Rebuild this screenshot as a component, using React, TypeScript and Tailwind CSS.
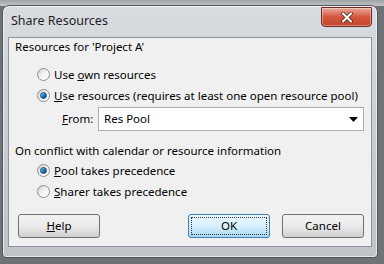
import React from 'react';

const font = { fontFamily: '"Noto Sans", "Open Sans", sans-serif' };

function Radio({ checked }: { checked?: boolean }) {
  return (
    <span className="relative flex h-[13px] w-[13px] shrink-0 items-center justify-center rounded-full border border-[#8e8f8f] bg-gradient-to-br from-[#cfcfcf] via-[#f4f4f4] to-[#ffffff]">
      {checked && (
        <span className="h-[7px] w-[7px] rounded-full border border-[#1a4b75] bg-gradient-to-br from-[#8fd3f6] via-[#1f7ec0] to-[#0d3d6e]" />
      )}
    </span>
  );
}

function RadioRow({ checked, children }: { checked?: boolean; children: React.ReactNode }) {
  return (
    <div className="ml-[28px] flex h-[21px] items-center gap-[4px] whitespace-nowrap">
      <Radio checked={checked} />
      <span>{children}</span>
    </div>
  );
}

function Button({ children, primary, className = '' }: { children: React.ReactNode; primary?: boolean; className?: string }) {
  if (primary) {
    return (
      <div className={`flex h-[24px] w-[82px] items-center justify-center rounded-[3px] border border-[#3c7fb1] bg-gradient-to-b from-[#eaf6fd] via-[#d9f0fc] to-[#a7d9f5] p-[2px] ${className}`}>
        <div className="flex h-full w-full items-center justify-center border border-dotted border-[#333]">{children}</div>
      </div>
    );
  }
  return (
    <div className={`flex h-[24px] w-[82px] items-center justify-center rounded-[3px] border border-[#707070] bg-gradient-to-b from-[#f2f2f2] via-[#ebebeb] to-[#cfcfcf] ${className}`}>
      {children}
    </div>
  );
}

export default function App() {
  return (
    <div className="relative h-[264px] w-[384px] overflow-hidden bg-[#6f7377]" style={font}>
      {/* background strip behind */}
      <div className="absolute left-0 top-0 h-[6px] w-full bg-gradient-to-b from-[#9ea2a6] to-[#c3c6c9]" />
      {/* Window */}
      <div className="absolute left-[2px] top-[5px] flex h-[253px] w-[376px] flex-col rounded-t-[7px] rounded-b-[4px] border border-[#50565c] bg-gradient-to-b from-[#d9dde1] via-[#c9cdd2] to-[#bfc4c9] shadow-[inset_0_0_0_1px_rgba(255,255,255,0.6)]">
        {/* Title bar */}
        <div className="relative flex h-[31px] shrink-0 items-center pl-[8px]">
          <span className="text-[12.5px] text-[#1e1e1e]">Share Resources</span>
          <div className="absolute right-[5px] top-[1px] flex h-[20px] w-[51px] items-center justify-center rounded-b-[4px] border border-[#6e2b21] bg-gradient-to-b from-[#e9a99b] via-[#d2553d] to-[#c7432b] shadow-[inset_0_0_0_1px_rgba(255,255,255,0.35)]">
            <svg width="12" height="11" viewBox="0 0 12 11">
              <path d="M2 1.5 L10 9.5 M10 1.5 L2 9.5" stroke="#3b1a14" strokeWidth="3.6" strokeLinecap="round" />
              <path d="M2 1.5 L10 9.5 M10 1.5 L2 9.5" stroke="#ffffff" strokeWidth="2.2" strokeLinecap="round" />
            </svg>
          </div>
        </div>
        {/* Client area */}
        <div className="mx-[5px] flex flex-col border border-[#8d949b] bg-[#f0f0f0] text-[11.5px] leading-none text-black">
          <div className="flex h-[18px] items-center whitespace-nowrap pl-[6px]">Resources for 'Project A'</div>
          <div className="mt-[8px]">
            <RadioRow>
              Use <u>o</u>wn resources
            </RadioRow>
            <RadioRow checked>
              <u>U</u>se resources (requires at least one open resource pool)
            </RadioRow>
          </div>
          <div className="mt-[1px] flex h-[24px] items-center">
            <span className="ml-[53px] w-[36px]">
              <u>F</u>rom:
            </span>
            <div className="flex h-[24px] w-[266px] items-center justify-between border border-[#abadb3] bg-white pl-[5px] pr-[5px]">
              <span>Res Pool</span>
              <svg width="9" height="5" viewBox="0 0 9 5">
                <path d="M0 0 H9 L4.5 5 Z" fill="#000" />
              </svg>
            </div>
          </div>
          <div className="mt-[11px] flex h-[18px] items-center whitespace-nowrap pl-[6px]">On conflict with calendar or resource information</div>
          <RadioRow checked>
            <u>P</u>ool takes precedence
          </RadioRow>
          <RadioRow>
            <u>S</u>harer takes precedence
          </RadioRow>
          <div className="mb-[8px] mt-[12px] flex items-center pl-[9px] pr-[7px]">
            <Button>
              <span>
                <u>H</u>elp
              </span>
            </Button>
            <Button primary className="ml-[88px]">
              OK
            </Button>
            <Button className="ml-[12px]">Cancel</Button>
          </div>
        </div>
      </div>
    </div>
  );
}
